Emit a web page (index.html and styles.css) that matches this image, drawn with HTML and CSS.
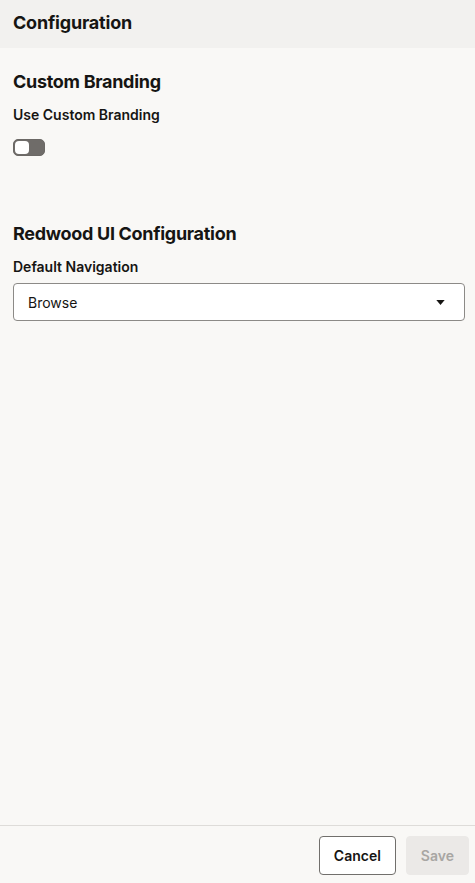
FILE: index.html
```html
<!DOCTYPE html>
<html lang="en">
<head>
    <meta charset="UTF-8">
    <meta name="viewport" content="width=device-width, initial-scale=1.0">
    <title>Configuration</title>
    <link rel="stylesheet" href="styles.css">
</head>
<body>
    <div class="page">
        <header class="page-header">
            <h1>Configuration</h1>
        </header>

        <main class="content">
            <section class="section">
                <h2>Custom Branding</h2>
                <label class="field-label">Use Custom Branding</label>
                <div class="switch"><span class="knob"></span></div>
            </section>

            <section class="section redwood">
                <h2>Redwood UI Configuration</h2>
                <label class="field-label">Default Navigation</label>
                <div class="select">
                    <span>Browse</span>
                    <svg class="caret" width="9" height="5" viewBox="0 0 10 6"><path d="M0 0h10L5 6z" fill="#161513"/></svg>
                </div>
            </section>
        </main>

        <footer class="page-footer">
            <button class="btn">Cancel</button>
            <button class="btn btn-disabled" disabled>Save</button>
        </footer>
    </div>
</body>
</html>
```

FILE: styles.css
```css
* {
  margin: 0;
  padding: 0;
  box-sizing: border-box;
  font-family: Inter, "Noto Sans", sans-serif;
}

body {
  background-color: #f9f8f6;
  color: #161513;
}

.page {
  display: flex;
  flex-direction: column;
  height: 100vh;
}

.page-header {
  height: 48px;
  background-color: #f2f1ef;
  padding: 0 13px;
  display: flex;
  align-items: center;
}

h1 {
  font-size: 18px;
  font-weight: 700;
  margin-top: -4px;
  letter-spacing: -0.2px;
}

.content {
  flex: 1;
  padding: 22px 10px 0 13px;
}

h2 {
  font-size: 18px;
  font-weight: 700;
  line-height: 24px;
  letter-spacing: -0.3px;
}

.field-label {
  display: block;
  font-size: 14px;
  font-weight: 600;
  line-height: 18px;
  margin-top: 12px;
}

.switch {
  width: 32px;
  height: 17px;
  margin-top: 15px;
  border-radius: 5px;
  background-color: #6f6c69;
  border: 1px solid #6b6865;
  padding: 1px;
}

.knob {
  display: block;
  width: 14px;
  height: 13px;
  background-color: #ffffff;
  border-radius: 4px;
}

.redwood {
  margin-top: 66px;
}

.select {
  margin-top: 7px;
  height: 38px;
  background-color: #ffffff;
  border: 1px solid #8c8a87;
  border-radius: 4px;
  display: flex;
  align-items: center;
  justify-content: space-between;
  padding: 0 19px 0 14px;
  font-size: 14px;
}

.page-footer {
  border-top: 1px solid #dedcd9;
  display: flex;
  justify-content: flex-end;
  gap: 10px;
  padding: 10px 6px 8px;
}

.btn {
  height: 39px;
  padding: 0 14px;
  font-size: 14px;
  font-weight: 600;
  background-color: #ffffff;
  border: 1px solid #716f6c;
  border-radius: 4px;
  color: #161513;
}

.btn-disabled {
  background-color: #ebe9e7;
  border-color: #ebe9e7;
  color: #a8a6a3;
  padding: 0 14px;
}
```
